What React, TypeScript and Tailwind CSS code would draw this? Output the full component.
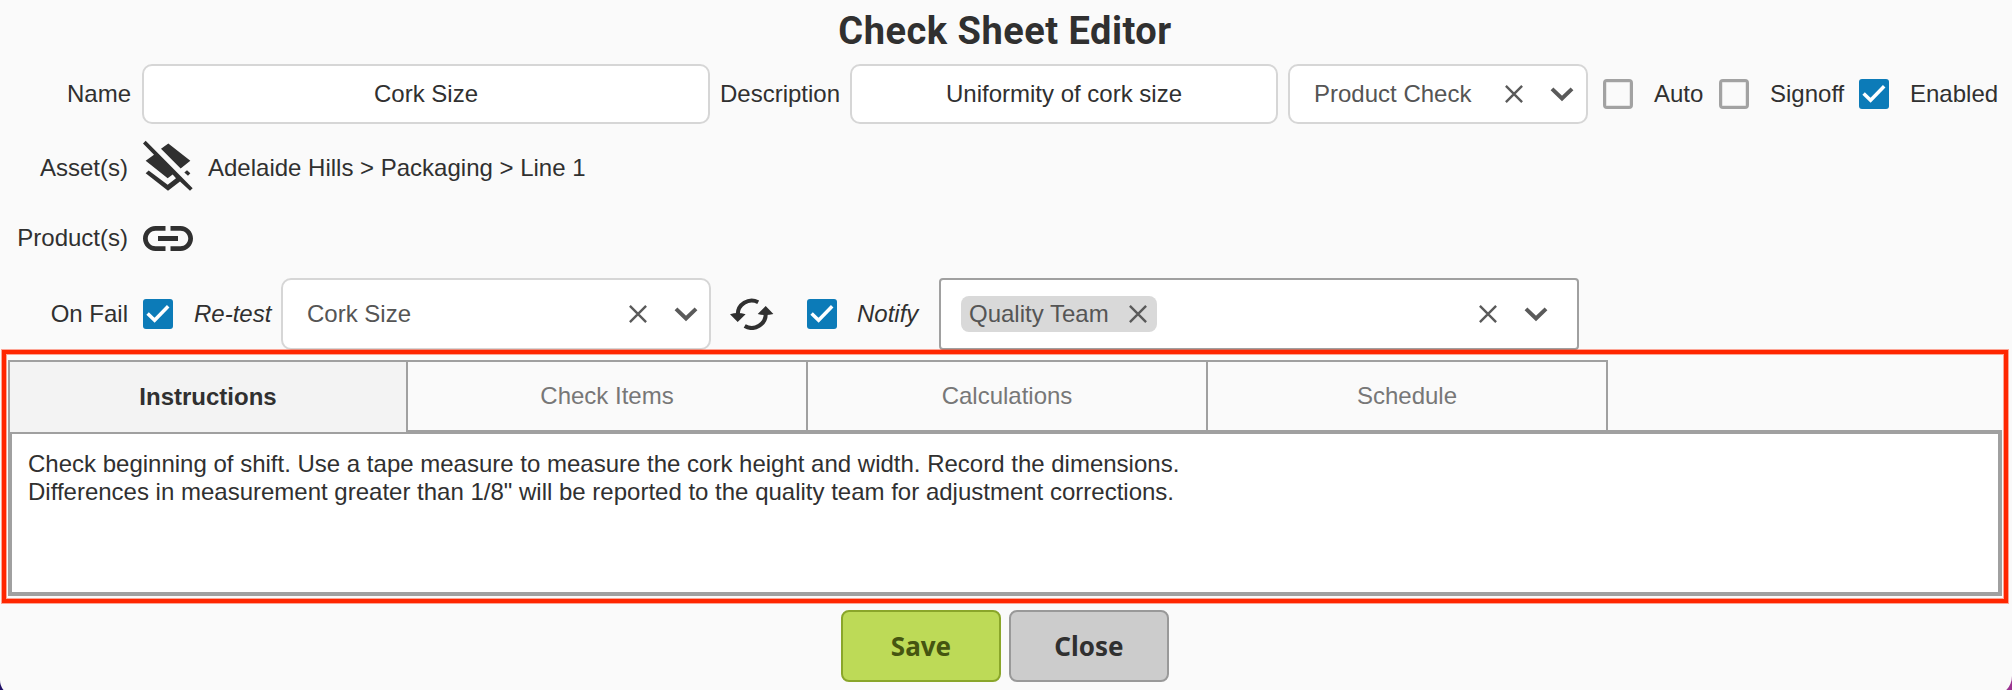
import React from "react";

const DARK = "#303030";

function Check({ on }: { on?: boolean }) {
  return on ? (
    <span className="flex h-[30px] w-[30px] shrink-0 items-center justify-center rounded-[3px] bg-[#0c7bb8]">
      <svg width="30" height="30" viewBox="0 0 30 30" fill="none" stroke="#fff" strokeWidth="3.5">
        <path d="M4.6 14.400 11.600 21.200 25.200 7.200" />
      </svg>
    </span>
  ) : (
    <span className="h-[30px] w-[30px] shrink-0 rounded-[4px] border-[3px] border-[#a2a2a2] shadow-[inset_0_0_0_1px_#e6e6e6]" />
  );
}

function Cross() {
  return (
    <svg className="shrink-0" width="20" height="20" viewBox="0 0 20 20" fill="none" stroke="#5a5a5a" strokeWidth="2.4">
      <path d="M1.900 1.900 18.100 18.100M18.100 1.900 1.900 18.100" />
    </svg>
  );
}

function Chevron() {
  return (
    <svg className="shrink-0" width="24" height="20" viewBox="0 0 24 20" fill="none" stroke="#5a5a5a" strokeWidth="4">
      <path d="M2 4.900 12 14.500 22 4.900" />
    </svg>
  );
}

const tabs = ["Check Items", "Calculations", "Schedule"];

export default function App() {
  return (
    <div className="relative h-[690px] w-[2012px] overflow-hidden bg-[linear-gradient(90deg,#1f0f66,#9b3390)] font-['Liberation_Sans',Arial,sans-serif] text-[24px] leading-[28px] text-[#303030]">
      <div className="flex h-[696px] flex-col rounded-br-[20px] rounded-bl-[16px] bg-[#fafafa]">
        <h1 className="flex h-[64px] items-center justify-center pr-[2px] pb-[2px] font-['Roboto',sans-serif] text-[38px] font-bold tracking-[0.5px]">
          <span className="whitespace-nowrap">Check Sheet Editor</span>
        </h1>

        <div className="flex h-[60px] items-center">
          <span className="w-[131px] text-right">Name</span>
          <div className="ml-[11px] flex h-[60px] w-[568px] items-center justify-center rounded-[10px] border-2 border-[#d6d6d6] bg-white">Cork Size</div>
          <span className="ml-[10px] w-[130px]">Description</span>
          <div className="flex h-[60px] w-[428px] items-center justify-center rounded-[10px] border-2 border-[#d6d6d6] bg-white">Uniformity of cork size</div>
          <div className="ml-[10px] flex h-[60px] w-[300px] items-center rounded-[10px] border-2 border-[#d6d6d6] bg-white pl-6 text-[#555]">
            <span className="w-[190px]">Product Check</span>
            <Cross />
            <span className="ml-[26px] flex"><Chevron /></span>
          </div>
          <div className="ml-[15px] flex w-[116px] items-center gap-[21px]"><Check />Auto</div>
          <div className="flex w-[140px] items-center gap-[21px]"><Check />Signoff</div>
          <div className="flex items-center gap-[21px]"><Check on />Enabled</div>
        </div>

        <div className="flex h-[87px] items-center">
          <span className="w-[128px] text-right">Asset(s)</span>
          <svg className="ml-[14px]" width="52" height="56" viewBox="36 28.5 156 168" fill={DARK}>
            <path d="M47 31 188 173 180 181 150 153 114 181 47 128 56 120 113 163 138 143 128 132 113 143 47 91 72 73 39 39z" />
            <path d="M93 55 115 39 181 91 152 114zM163 126 171 119 181 128 174 136z" />
          </svg>
          <span className="ml-[14px]">Adelaide Hills &gt; Packaging &gt; Line 1</span>
        </div>

        <div className="flex h-[54px] items-center">
          <span className="w-[128px] text-right">Product(s)</span>
          <svg className="ml-[15px]" width="50" height="25" viewBox="2 7 20 10" fill={DARK}>
            <path d="M3.9 12c0-1.71 1.39-3.1 3.1-3.1h4V7H7c-2.76 0-5 2.24-5 5s2.24 5 5 5h4v-1.9H7c-1.71 0-3.1-1.39-3.1-3.1zM8 13h8v-2H8v2zm9-6h-4v1.9h4c1.71 0 3.1 1.39 3.1 3.1s-1.39 3.1-3.1 3.1h-4V17h4c2.76 0 5-2.24 5-5s-2.24-5-5-5z" />
          </svg>
        </div>

        <div className="mt-[13px] flex h-[72px] items-center">
          <span className="w-[128px] text-right">On Fail</span>
          <span className="ml-[15px] flex"><Check on /></span>
          <span className="ml-[21px] w-[87px] italic">Re-test</span>
          <div className="flex h-[72px] w-[430px] items-center rounded-[10px] border-2 border-[#d6d6d6] bg-white pl-6 text-[#555]">
            <span className="w-[321px]">Cork Size</span>
            <Cross />
            <span className="ml-[26px] flex"><Chevron /></span>
          </div>
          <svg className="ml-[19px]" width="44" height="32" viewBox="0 0 44 32" fill="none" stroke={DARK} strokeWidth="4">
            <path d="M7.700 17A14 14 0 0 1 28.200 4.200M35.700 15A14 14 0 0 1 14.700 28" />
            <path d="M0 16.200Q7.700 14 15.600 16.200L7.700 24zM27.700 16Q35.700 18 43.400 16L35.700 8z" fill={DARK} stroke="none" />
          </svg>
          <span className="ml-[33px] flex"><Check on /></span>
          <span className="ml-[20px] w-[82px] italic">Notify</span>
          <div className="flex h-[72px] w-[640px] items-center rounded-[4px] border-2 border-[#a0a0a0] bg-white pl-5 text-[#555]">
            <div className="flex h-[36px] w-[196px] items-center justify-between rounded-[8px] bg-[#d9d9d9] pr-[9px] pl-2">
              Quality Team
              <Cross />
            </div>
            <span className="ml-[321px] flex"><Cross /></span>
            <span className="ml-[26px] flex"><Chevron /></span>
          </div>
        </div>

        <div className="z-10 ml-[2px] flex h-[253px] w-[2006px] flex-col border-4 border-[#ff2600] px-[2px] pt-[6px] pb-[2px] shadow-[0_0_0_1px_#ff260066,inset_0_0_0_1px_#ff260066]">
          <div className="z-10 flex h-[70px] w-[1600px] border-t-2 border-l-2 border-[#a0a0a0]">
            <div className="flex h-[70px] w-[398px] shrink-0 items-center justify-center border-r-2 border-[#a0a0a0] bg-[#f3f3f3] font-bold">Instructions</div>
            {tabs.map((t) => (
              <div key={t} className="flex w-[400px] shrink-0 items-center justify-center border-r-2 border-[#a0a0a0] text-[#777]">{t}</div>
            ))}
          </div>
          <div className="h-[166px] border-4 border-[#a0a0a0] bg-white px-4 pt-4">
            <p>Check beginning of shift. Use a tape measure to measure the cork height and width. Record the dimensions.</p>
            <p>Differences in measurement greater than 1/8" will be reported to the quality team for adjustment corrections.</p>
          </div>
        </div>

        <div className="mt-[7px] flex justify-center gap-2 pr-[2px] font-['Noto_Sans',sans-serif] text-[26px] font-bold">
          <button className="h-[72px] w-[160px] rounded-[8px] border-2 border-[#8aa62a] bg-[#bdda57] text-[#455510]">Save</button>
          <button className="h-[72px] w-[160px] rounded-[8px] border-2 border-[#999] bg-[#ccc] text-[#303030]">Close</button>
        </div>
      </div>
    </div>
  );
}
